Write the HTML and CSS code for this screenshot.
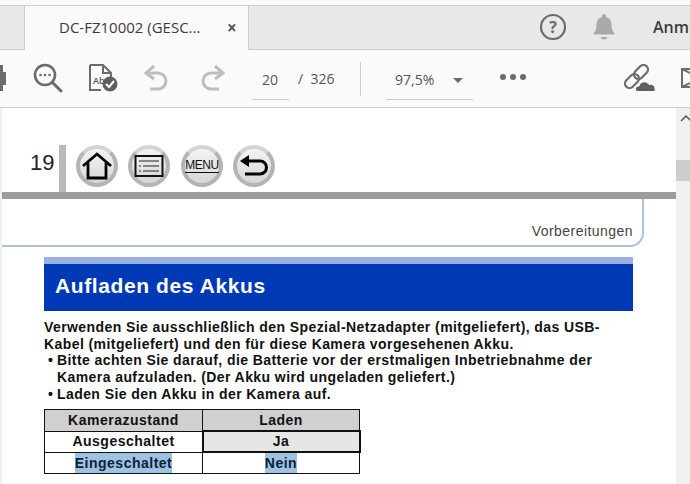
FILE: index.html
```html
<!DOCTYPE html>
<html lang="de">

<head>
    <meta charset="UTF-8">
    <title>DC-FZ10002</title>
    <link rel="stylesheet" href="styles.css">
</head>

<body>
    <div class="app">
        <div class="tabbar">
            <div class="tab-home"></div>
            <div class="tab">
                <span class="tab-title">DC-FZ10002 (GESC...</span>
                <span class="tab-close">&#215;</span>
            </div>
            <div class="tab-right">
                <svg class="help" width="28" height="28" viewBox="0 0 28 28">
                    <circle cx="14" cy="14" r="12" fill="none" stroke="#6b6b6b" stroke-width="2.2"/>
                    <text x="14" y="19.5" text-anchor="middle" class="help-mark">?</text>
                </svg>
                <svg class="bell" width="24" height="27" viewBox="0 0 24 27">
                    <path d="M12 1c1.200 0 2 .8 2 2v1c4 1 5.500 4.500 5.500 8 0 4 1 6 3 8v1.500h-21V20c2-2 3-4 3-8 0-3.500 1.500-7 5.500-8V3c0-1.200.8-2 2-2z" fill="#a9a9a9"/>
                    <path d="M8.500 24h7c-.5 1.500-2 2.500-3.500 2.500S9 25.500 8.500 24z" fill="#a9a9a9"/>
                </svg>
                <span class="signin">Anm</span>
            </div>
        </div>

        <div class="toolbar">
            <svg class="tool-cut" width="6" height="26" viewBox="0 0 6 26">
                <path d="M0 0h3v7h3v13H3v6H0z" fill="#6b6b6b"/>
            </svg>
            <svg class="tool-search" width="30" height="30" viewBox="0 0 30 30">
                <circle cx="12" cy="12" r="10" fill="none" stroke="#6b6b6b" stroke-width="2.600"/>
                <path d="M19.500 19.500L28 28" stroke="#6b6b6b" stroke-width="3" stroke-linecap="round"/>
                <circle cx="7.500" cy="12" r="1.300" fill="#6b6b6b"/>
                <circle cx="12" cy="12" r="1.300" fill="#6b6b6b"/>
                <circle cx="16.500" cy="12" r="1.300" fill="#6b6b6b"/>
            </svg>
            <svg class="tool-spell" width="29" height="28" viewBox="0 0 29 28">
                <path d="M1 1h13l8 8v6M1 1v25h11" fill="none" stroke="#6b6b6b" stroke-width="2"/>
                <path d="M14 1v8h8" fill="none" stroke="#6b6b6b" stroke-width="2"/>
                <text x="4" y="20" class="spell-mark">Ab</text>
                <circle cx="21" cy="20" r="7.500" fill="#5f5f5f"/>
                <path d="M17 20l3 3 5-6" fill="none" stroke="#fff" stroke-width="2"/>
            </svg>
            <svg class="tool-undo" width="24" height="26" viewBox="0 0 24 26">
                <path d="M3 8h11a8 8 0 0 1 0 16H6" fill="none" stroke="#bdbdbd" stroke-width="3"/>
                <path d="M10 1L2 8l8 6" fill="none" stroke="#bdbdbd" stroke-width="3"/>
            </svg>
            <svg class="tool-redo" width="24" height="26" viewBox="0 0 24 26">
                <path d="M21 8H10a8 8 0 0 0 0 16h8" fill="none" stroke="#bdbdbd" stroke-width="3"/>
                <path d="M14 1l8 7-8 6" fill="none" stroke="#bdbdbd" stroke-width="3"/>
            </svg>
            <div class="page-input">20</div>
            <span class="page-total">/&nbsp; 326</span>
            <div class="divider"></div>
            <div class="zoom-select">
                <span>97,5%</span>
                <span class="caret"></span>
            </div>
            <div class="dots"><i></i><i></i><i></i></div>
            <svg class="tool-link" width="33" height="28" viewBox="0 0 33 28">
                <g fill="none" stroke="#6b6b6b" stroke-width="2.200">
                    <rect x="10" y="3.500" width="16" height="9" rx="4.500" transform="rotate(-45 18 8)"/>
                    <rect x="1" y="12.500" width="16" height="9" rx="4.500" transform="rotate(-45 9 17)"/>
                </g>
                <path d="M15 27.500c-3.500 0-3.500-5.500 1-5.500 1-5 8-5.500 10-1.500 4-1 7 2 6 7z" fill="#5f5f5f" stroke="#fafafa" stroke-width="1"/>
            </svg>
            <svg class="tool-mail" width="20" height="22" viewBox="0 0 20 22">
                <path d="M1 2h19v18H1z M1 2l18 9L1 20" fill="none" stroke="#6b6b6b" stroke-width="2"/>
            </svg>
        </div>

        <div class="viewer">
            <div class="page">
                <div class="page-head">
                    <span class="page-num">19</span>
                    <div class="page-bar"></div>
                    <div class="round-btn">
                        <svg width="32" height="30" viewBox="0 0 32 30">
                            <path d="M2 15L16 3l14 12M7 12v15h18V12" fill="none" stroke="#000" stroke-width="2.800"/>
                        </svg>
                    </div>
                    <div class="round-btn gap-toc">
                        <svg width="30" height="24" viewBox="0 0 30 24">
                            <path d="M1.500 2h27v20h-27z" fill="none" stroke="#111" stroke-width="2"/>
                            <path d="M5 7h20M9 12h16M9 17h16" stroke="#222" stroke-width="1"/>
                            <path d="M5 12h2M5 17h2" stroke="#222" stroke-width="1"/>
                        </svg>
                    </div>
                    <div class="round-btn gap-menu"><span class="menu-label">MENU</span></div>
                    <div class="round-btn gap-back">
                        <svg width="28" height="24" viewBox="0 0 28 24">
                            <path d="M8 7h12a6.500 6.500 0 0 1 0 13H5" fill="none" stroke="#000" stroke-width="3"/>
                            <path d="M0 7l9-6v12z" fill="#000"/>
                        </svg>
                    </div>
                </div>
                <div class="rule"></div>
                <div class="chapter">
                    <span>Vorbereitungen</span>
                </div>
                <div class="content">
                    <h1 class="title">Aufladen des Akkus</h1>
                    <p class="intro">Verwenden Sie ausschließlich den Spezial-Netzadapter (mitgeliefert), das USB-<br>Kabel (mitgeliefert) und den für diese Kamera vorgesehenen Akku.</p>
                    <ul class="notes">
                        <li>Bitte achten Sie darauf, die Batterie vor der erstmaligen Inbetriebnahme der<br>Kamera aufzuladen. (Der Akku wird ungeladen geliefert.)</li>
                        <li>Laden Sie den Akku in der Kamera auf.</li>
                    </ul>
                    <table class="state-table">
                        <tr class="row-head">
                            <th>Kamerazustand</th>
                            <th>Laden</th>
                        </tr>
                        <tr class="row-off">
                            <td>Ausgeschaltet</td>
                            <td class="cell-active">Ja</td>
                        </tr>
                        <tr class="row-on">
                            <td><span class="mark">Eingeschaltet</span></td>
                            <td><span class="mark">Nein</span></td>
                        </tr>
                    </table>
                </div>
            </div>
            <div class="scrollbar">
                <svg class="scroll-up" width="12" height="14" viewBox="0 0 12 14">
                    <path d="M1 11l5-5 5 5" fill="none" stroke="#555" stroke-width="1.500"/>
                </svg>
                <div class="scroll-thumb"></div>
            </div>
        </div>
    </div>
</body>
</html>
```

FILE: styles.css
```css
html, body {
    margin: 0;
    padding: 0;
    height: 100%;
    overflow: hidden;
    background-color: #fff;
}

.app {
    width: 690px;
    height: 484px;
    display: flex;
    flex-direction: column;
    overflow: hidden;
    padding-top: 5px;
    box-sizing: border-box;
    background-color: #fafafa;
    font-family: 'Open Sans', sans-serif;
}

/* tabs */
.tabbar {
    height: 45px;
    flex: none;
    display: flex;
    box-sizing: border-box;
    background-color: #e8e8e8;
    border-top: 1px solid #cdcdcd;
    border-bottom: 1px solid #cdcdcd;
}

.tab-home {
    width: 24px;
    flex: none;
    border-right: 1px solid #cdcdcd;
}

.tab {
    width: 224px;
    flex: none;
    height: 44px;
    box-sizing: border-box;
    display: flex;
    align-items: center;
    padding: 0 0 2px 34px;
    background-color: #fafafa;
    border-right: 1px solid #cdcdcd;
    color: #3c3c3c;
}

.tab-title {
    font-size: 15px;
    width: 168px;
    white-space: nowrap;
}

.tab-close {
    font-size: 17px;
    font-weight: 700;
    color: #555;
    line-height: 1;
}

.tab-right {
    flex: 1;
    display: flex;
    align-items: center;
    padding-left: 290px;
    white-space: nowrap;
    overflow: hidden;
    padding-bottom: 2px;
}

.help, .bell {
    flex: none;
}

.help-mark {
    font-family: 'Open Sans', sans-serif;
    font-size: 16px;
    font-weight: 700;
    fill: #6b6b6b;
}

.bell {
    margin-left: 25px;
}

.signin {
    flex: none;
    margin-left: 37px;
    font-size: 16px;
    font-weight: 600;
    color: #3c3c3c;
}

/* toolbar */
.toolbar {
    height: 58px;
    flex: none;
    display: flex;
    align-items: center;
    box-sizing: border-box;
    background-color: #fafafa;
    border-bottom: 1px solid #cdcdcd;
    color: #555;
    font-size: 14px;
    white-space: nowrap;
    overflow: hidden;
    padding-bottom: 1px;
}

.tool-cut, .tool-search, .tool-spell, .tool-undo, .tool-redo, .tool-link, .tool-mail {
    flex: none;
}

.tool-search {
    margin-left: 27px;
}

.tool-spell {
    margin-left: 26px;
}

.spell-mark {
    font-family: 'Open Sans', sans-serif;
    font-size: 9px;
    font-weight: 600;
    fill: #555;
}

.tool-undo {
    margin-left: 26px;
}

.tool-redo {
    margin-left: 33px;
}

.page-input {
    width: 37px;
    height: 33px;
    flex: none;
    margin: 11px 0 0 27px;
    box-sizing: border-box;
    line-height: 25px;
    padding-left: 10px;
    border-bottom: 1px solid #cdcdcd;
}

.page-total {
    width: 62px;
    flex: none;
    margin-left: 9px;
}

.divider {
    width: 1px;
    height: 34px;
    flex: none;
    margin-top: 1px;
    background-color: #cdcdcd;
}

.zoom-select {
    width: 87px;
    height: 33px;
    flex: none;
    margin: 11px 0 0 25px;
    box-sizing: border-box;
    display: flex;
    line-height: 25px;
    padding-left: 9px;
    border-bottom: 1px solid #cdcdcd;
}

.caret {
    width: 0;
    height: 0;
    margin: 11px 0 0 19px;
    border-left: 5px solid transparent;
    border-right: 5px solid transparent;
    border-top: 5px solid #6b6b6b;
}

.dots {
    display: flex;
    gap: 4px;
    flex: none;
    margin: 0 0 3px 27px;
}

.dots i {
    width: 6px;
    height: 6px;
    border-radius: 50%;
    background-color: #6b6b6b;
}

.tool-link {
    margin-left: 97px;
}

.tool-mail {
    margin-left: 25px;
}

/* document */
.viewer {
    flex: 1;
    display: flex;
    min-height: 0;
    background-color: #f0f0f0;
    padding-left: 2px;
}

.page {
    width: 674px;
    flex: none;
    background-color: #fff;
    overflow: hidden;
    font-family: 'Liberation Sans', Arial, sans-serif;
}

.page-head {
    display: flex;
    align-items: center;
    height: 47px;
    margin-top: 37px;
    padding-left: 28px;
}

.page-num {
    width: 29px;
    font-size: 22px;
    color: #222;
    margin-bottom: 12px;
}

.page-bar {
    width: 7px;
    height: 47px;
    background-color: #b9b9bb;
}

.round-btn {
    width: 42px;
    height: 42px;
    flex: none;
    margin-left: 10px;
    box-sizing: border-box;
    border-radius: 50%;
    display: flex;
    align-items: center;
    justify-content: center;
    background: linear-gradient(#f4f4f4, #d6d6d6);
    border: 4px solid #b4b4b4;
    border-top-color: #d4d4d4;
    margin-bottom: 5px;
}

.round-btn svg {
    flex: none;
}

.gap-toc {
    margin-left: 10px;
}

.gap-menu {
    margin-left: 11px;
}

.gap-back {
    margin-left: 10px;
}

.menu-label {
    font-size: 12px;
    letter-spacing: -0.4px;
    color: #111;
    border-bottom: 1px solid #111;
    line-height: 13px;
}

.rule {
    height: 7px;
    background-color: #9c9c9c;
}

.chapter {
    width: 642px;
    height: 48px;
    box-sizing: border-box;
    display: flex;
    align-items: flex-end;
    justify-content: flex-end;
    padding: 0 9px 6px 0;
    border-right: 2px solid #aebfdf;
    border-bottom: 2px solid #aebfdf;
    border-bottom-right-radius: 14px;
    font-size: 14px;
    letter-spacing: 0.45px;
    color: #444;
}

.content {
    margin: 10px 0 0 42px;
    width: 589px;
}

.title {
    margin: 0;
    height: 47px;
    box-sizing: content-box;
    padding-left: 11px;
    border-top: 7px solid #9ab0e0;
    background-color: #0039b5;
    color: #fff;
    font-size: 21px;
    line-height: 43px;
    letter-spacing: 0.6px;
    font-weight: 700;
}

.intro {
    margin: 8px 0 0;
    font-size: 14px;
    line-height: 16.7px;
    font-weight: 700;
    color: #111;
    letter-spacing: 0.42px;
    white-space: nowrap;
}

.notes {
    list-style-type: none;
    margin: 0;
    padding: 0 0 0 13px;
    font-size: 14px;
    line-height: 16.7px;
    font-weight: 700;
    color: #111;
    letter-spacing: 0.42px;
    white-space: nowrap;
}

.notes li {
    position: relative;
}

.notes li::before {
    content: "\2022";
    position: absolute;
    left: -9px;
}

.state-table {
    width: 316px;
    margin-top: 6px;
    border-collapse: collapse;
    table-layout: fixed;
    font-size: 14px;
    letter-spacing: 0.5px;
    font-weight: 700;
    color: #111;
}

.state-table th, .state-table td {
    padding: 0;
    border: 1px solid #111;
    text-align: center;
    line-height: 16px;
}

.state-table th:first-child, .state-table td:first-child {
    width: 157px;
}

.row-head th {
    height: 21px;
    background-color: #d0d0d0;
    font-weight: 700;
}

.row-off td {
    height: 19px;
    padding-bottom: 1px;
}

.row-on td {
    height: 20px;
}

.cell-active {
    background-color: #e6e6e6;
    outline: 2px solid #111;
    outline-offset: -1px;
}

.mark {
    display: block;
    width: fit-content;
    margin: 0 auto;
    background-color: #9dc3e0;
    line-height: 20px;
    color: #0b2238;
}

.scrollbar {
    flex: 1;
    display: flex;
    flex-direction: column;
    padding: 2px 0 0 4px;
    overflow: hidden;
}

.scroll-up {
    flex: none;
}

.scroll-thumb {
    height: 21px;
    margin: 36px 0 0 -4px;
    background-color: #cdcdcd;
}
```
